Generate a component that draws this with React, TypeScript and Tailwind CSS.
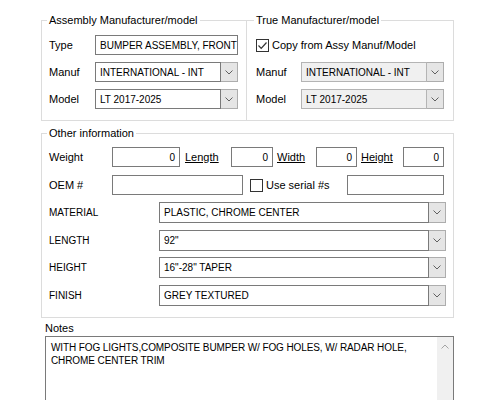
import React from 'react'

const LABEL = "font-['Liberation_Sans',sans-serif] text-[11px] leading-[15px]"
const FIELD = "font-['Liberation_Sans',sans-serif] text-[10px] leading-[13px] whitespace-nowrap"

function Chevron({ color = '#606060' }: { color?: string }) {
  return (
    <svg width="8" height="5" viewBox="0 0 8 5" fill="none" stroke={color} strokeWidth="1">
      <path d="M0.5 0.5 L4 4 L7.5 0.5" />
    </svg>
  )
}

function CheckBox({ checked }: { checked?: boolean }) {
  return (
    <span className="w-[13px] h-[13px] shrink-0 border border-[#333] bg-white flex items-center justify-center">
      {checked && (
        <svg width="11" height="11" viewBox="0 0 11 11" fill="none" stroke="#333" strokeWidth="1.2">
          <path d="M1.5 5.5 L4.2 8.3 L9.5 2.5" />
        </svg>
      )}
    </span>
  )
}

function TextBox({ value, w, right }: { value?: string; w: string; right?: boolean }) {
  return (
    <div
      className={`${w} h-[20px] shrink-0 border border-[#7a7a7a] bg-white flex items-center overflow-hidden ${FIELD} ${
        right ? 'justify-end pr-[4px]' : 'pl-[4px]'
      }`}
    >
      {value}
    </div>
  )
}

function Combo({ value, w, h = 'h-[20px]', disabled }: { value: string; w: string; h?: string; disabled?: boolean }) {
  return (
    <div className={`${w} ${h} shrink-0 flex`}>
      <div
        className={`flex-1 border flex items-center pl-[4px] ${FIELD} ${
          disabled ? 'bg-[#f0f0f0] border-[#b4b4b4]' : 'bg-white border-[#7a7a7a]'
        }`}
      >
        {value}
      </div>
      <div className="w-[17px] border border-l-0 border-[#adadad] bg-[#e5e5e5] flex items-center justify-center">
        <Chevron />
      </div>
    </div>
  )
}

function Legend({ children, ml }: { children: React.ReactNode; ml: string }) {
  return <legend className={`${LABEL} ${ml} px-[2px]`}>{children}</legend>
}

export default function App() {
  return (
    <div className="w-[500px] h-[400px] bg-white overflow-hidden text-black">
      <div className="pl-[41px] pt-[13px] w-[454px]">
        {/* Top groups */}
        <div className="flex">
          <fieldset className="w-[206px] h-[108px] border border-[#dcdcdc]">
            <Legend ml="ml-[5px]">Assembly Manufacturer/model</Legend>
            <div className="flex flex-col gap-[7px] mt-[7px] pl-[7px]">
              <div className="flex items-center">
                <span className={`${LABEL} w-[46px]`}>Type</span>
                <TextBox w="w-[143px]" value="BUMPER ASSEMBLY, FRONT" />
              </div>
              <div className="flex items-center">
                <span className={`${LABEL} w-[46px]`}>Manuf</span>
                <Combo w="w-[143px]" value="INTERNATIONAL - INT" />
              </div>
              <div className="flex items-center">
                <span className={`${LABEL} w-[46px]`}>Model</span>
                <Combo w="w-[143px]" value="LT 2017-2025" />
              </div>
            </div>
          </fieldset>
          <fieldset className="w-[207px] h-[108px] border border-l-0 border-[#dcdcdc]">
            <Legend ml="ml-[7px]">True Manufacturer/model</Legend>
            <div className="flex flex-col gap-[7px] mt-[7px] pl-[9px]">
              <div className="flex items-center h-[20px] gap-[3px]">
                <CheckBox checked />
                <span className={LABEL}>Copy from Assy Manuf/Model</span>
              </div>
              <div className="flex items-center">
                <span className={`${LABEL} w-[45px]`}>Manuf</span>
                <Combo w="w-[143px]" value="INTERNATIONAL - INT" disabled />
              </div>
              <div className="flex items-center">
                <span className={`${LABEL} w-[45px]`}>Model</span>
                <Combo w="w-[143px]" value="LT 2017-2025" disabled />
              </div>
            </div>
          </fieldset>
        </div>

        {/* Other information */}
        <fieldset className="mt-[5px] w-[413px] border border-[#dcdcdc] pb-[11px]">
          <Legend ml="ml-[5px]">Other information</Legend>
          <div className="flex flex-col mt-[6px] pl-[7px]">
            <div className="flex items-center">
              <span className={`${LABEL} w-[63px]`}>Weight</span>
              <TextBox w="w-[68px]" value="0" right />
              <span className={`${LABEL} underline ml-[5px] w-[46px]`}>Length</span>
              <TextBox w="w-[42px]" value="0" right />
              <span className={`${LABEL} underline ml-[4px] w-[39px]`}>Width</span>
              <TextBox w="w-[41px]" value="0" right />
              <span className={`${LABEL} underline ml-[4px] w-[42px]`}>Height</span>
              <TextBox w="w-[41px]" value="0" right />
            </div>
            <div className="flex items-center mt-[8px]">
              <span className={`${LABEL} w-[63px]`}>OEM #</span>
              <TextBox w="w-[131px]" />
              <span className="ml-[7px] w-[97px] flex items-center gap-[3px]">
                <CheckBox />
                <span className={LABEL}>Use serial #s</span>
              </span>
              <TextBox w="w-[97px]" />
            </div>
            <div className="flex flex-col gap-[6.5px] mt-[7px]">
              {[
                ['MATERIAL', 'PLASTIC, CHROME CENTER'],
                ['LENGTH', '92"'],
                ['HEIGHT', '16"-28" TAPER'],
                ['FINISH', 'GREY TEXTURED'],
              ].map(([k, v]) => (
                <div key={k} className="flex items-center">
                  <span className={`${FIELD} w-[110px]`}>{k}</span>
                  <Combo w="w-[287px]" h="h-[21px]" value={v} />
                </div>
              ))}
            </div>
          </div>
        </fieldset>

        {/* Notes */}
        <div className="pl-[4px] mt-[3px]">
          <div className={LABEL}>Notes</div>
          <div className="w-[409px] h-[80px] border border-[#7a7a7a] flex">
            <div className={`flex-1 px-[5px] pt-[4px] ${FIELD} tracking-[-0.1px]`}>
              WITH FOG LIGHTS,COMPOSITE BUMPER W/ FOG HOLES, W/ RADAR HOLE,
              <br />
              CHROME CENTER TRIM
            </div>
            <div className="w-[16px] bg-[#f0f0f0] flex justify-center pt-[7px]">
              <svg width="8" height="5" viewBox="0 0 8 5" fill="none" stroke="#a3a3a3" strokeWidth="1">
                <path d="M0.5 4.5 L4 1 L7.5 4.5" />
              </svg>
            </div>
          </div>
        </div>
      </div>
    </div>
  )
}
